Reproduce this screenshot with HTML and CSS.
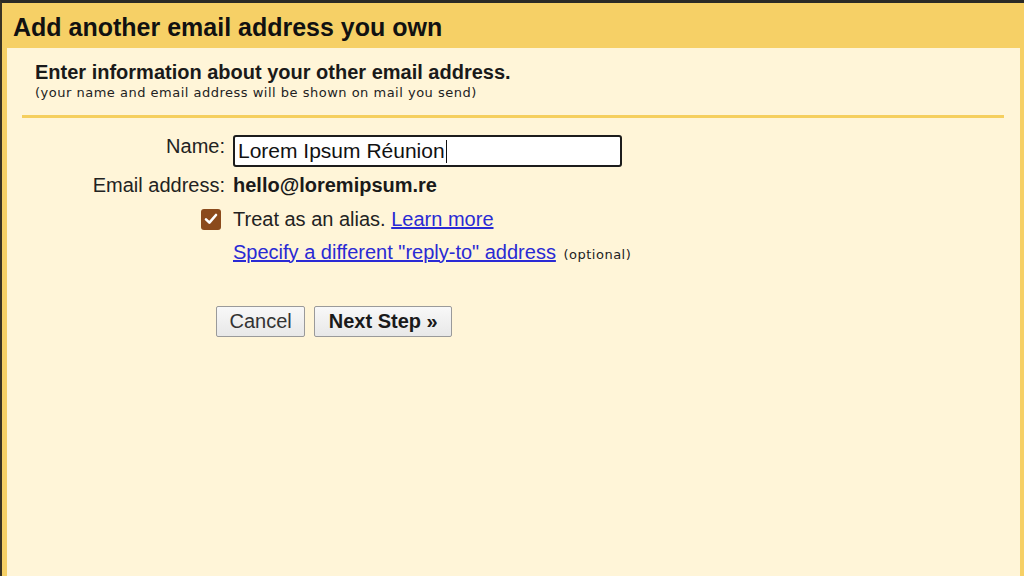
FILE: index.html
```html
<!DOCTYPE html>
<html>
<head>
<meta charset="utf-8">
<link rel="stylesheet" href="styles.css">
</head>
<body>
<div class="frame">
  <div class="header">Add another email address you own</div>
  <div class="panel">
    <div class="intro">
      <div class="intro-title">Enter information about your other email address.</div>
      <div class="intro-sub">(your name and email address will be shown on mail you send)</div>
    </div>
    <div class="rule"></div>
    <div class="form">
      <div class="row row-name">
        <div class="label">Name:</div>
        <div class="value"><div class="input">Lorem Ipsum Réunion<span class="caret"></span></div></div>
      </div>
      <div class="row row-email">
        <div class="label">Email address:</div>
        <div class="value email">hello@loremipsum.re</div>
      </div>
      <div class="row row-alias">
        <div class="label">
          <span class="checkbox">
            <svg width="16" height="16" viewBox="0 0 16 16"><path d="M3 8.4 L6.4 11.6 L13 4" fill="none" stroke="#ffffff" stroke-width="2.6" stroke-linecap="round" stroke-linejoin="round"/></svg>
          </span>
        </div>
        <div class="value">Treat as an alias. <a class="link" href="#">Learn more</a></div>
      </div>
      <div class="row row-reply">
        <div class="label"></div>
        <div class="value"><a class="link" href="#">Specify a different "reply-to" address</a> <span class="small">(optional)</span></div>
      </div>
    </div>
    <div class="buttons">
      <button class="btn btn-cancel">Cancel</button>
      <button class="btn btn-bold">Next Step »</button>
    </div>
  </div>
</div>
</body>
</html>
```

FILE: styles.css
```css
html, body {
  margin: 0;
  padding: 0;
  width: 1024px;
  height: 576px;
  overflow: hidden;
  background: #2e2a22;
}

.frame {
  box-sizing: border-box;
  width: 1024px;
  height: 576px;
  border-top: 3px solid #2b2a26;
  border-left: 2px solid #3a3323;
  background: #f6d066;
  padding: 0 4px 0 5px;
  display: flex;
  flex-direction: column;
  font-family: "Liberation Sans", Arial, sans-serif;
  color: #1a1a1a;
}

.header {
  height: 45px;
  flex: none;
  display: flex;
  align-items: center;
  padding-left: 6px;
  padding-top: 3px;
  font-size: 25px;
  font-weight: bold;
  color: #111;
  box-sizing: border-box;
}

.panel {
  flex: 1;
  background: #fff5d8;
  padding-top: 12px;
}

.intro {
  padding-left: 28px;
}

.intro-title {
  font-size: 20px;
  font-weight: bold;
  line-height: 24px;
  color: #1a1a1a;
}

.intro-sub {
  margin-top: 1px;
  font-family: "DejaVu Sans", Verdana, sans-serif;
  font-size: 13px;
  letter-spacing: 0.5px;
  line-height: 16px;
  color: #222;
}

.rule {
  margin: 14px 16px 0 15px;
  height: 3px;
  background: #f5cf5e;
}

.form {
  margin-top: 17px;
}

.row {
  display: flex;
  align-items: center;
  font-size: 20px;
  color: #222;
}

.label {
  width: 218px;
  flex: none;
  display: flex;
  justify-content: flex-end;
  margin-right: 8px;
}

.row-name { height: 32px; }
.row-email { height: 36px; }
.row-alias { height: 32px; }
.row-reply { height: 34px; }

.row-name .label {
  align-self: flex-start;
  padding-top: 0;
}

.input {
  box-sizing: border-box;
  width: 389px;
  height: 32px;
  border: 2px solid #1c1c1c;
  border-radius: 3px;
  background: #ffffff;
  padding: 0 3px;
  display: flex;
  align-items: center;
  color: #111;
  font-size: 21px;
}

.caret {
  display: inline-block;
  width: 1px;
  height: 23px;
  background: #111;
  margin-left: 1px;
}

.email {
  font-weight: bold;
  color: #1a1a1a;
}

.checkbox {
  width: 20px;
  height: 21px;
  border-radius: 3px;
  background: #8b4a1c;
  display: flex;
  align-items: center;
  justify-content: center;
  margin-right: 4px;
}

.link {
  color: #2a2ad4;
  text-decoration: underline;
}

.small {
  font-family: "DejaVu Sans", Verdana, sans-serif;
  font-size: 13px;
  letter-spacing: 0.5px;
  color: #222;
  margin-left: 2px;
}

.buttons {
  margin-top: 37px;
  padding-left: 209px;
  display: flex;
  gap: 9px;
}

.btn {
  height: 31px;
  box-sizing: border-box;
  border: 1px solid #9a9a9a;
  border-radius: 2px;
  background: linear-gradient(#f8f8f8, #e8e8e8);
  font-family: "Liberation Sans", Arial, sans-serif;
  font-size: 20px;
  color: #333;
  padding: 0 13.5px;
  margin: 0;
}

.btn-cancel {
  padding: 0 12.5px;
}

.btn-bold {
  font-weight: bold;
  color: #1a1a1a;
}
```
